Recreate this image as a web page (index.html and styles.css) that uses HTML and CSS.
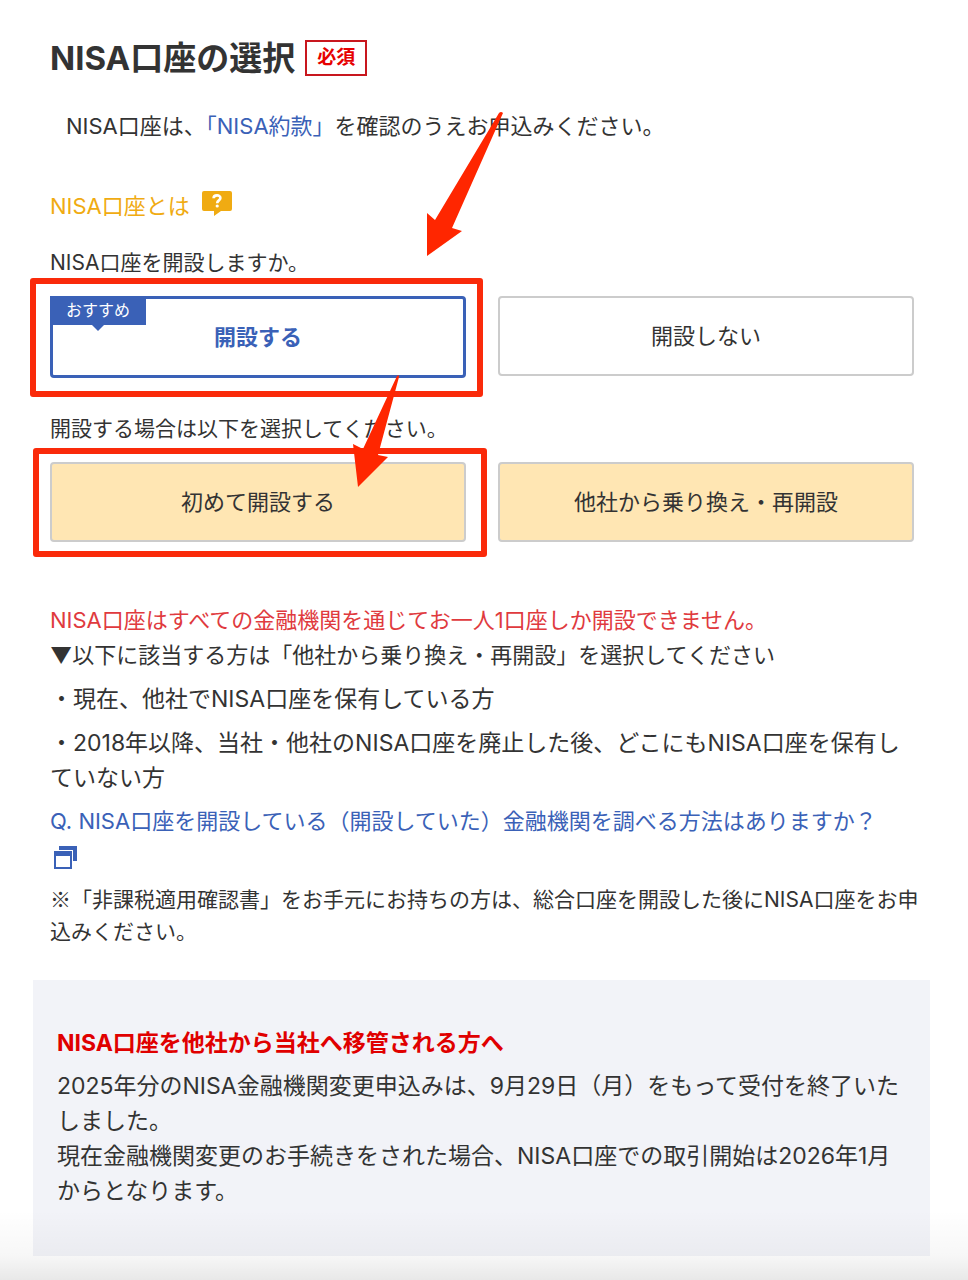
FILE: index.html
```html
<!DOCTYPE html>
<html lang="ja">
  <head>
    <meta charset="utf-8">
    <meta name="viewport" content="width=device-width, initial-scale=1">
    <title>NISA口座の選択</title>
    <link rel="stylesheet" href="styles.css">
  </head>
  <body>
    <main class="page">
      <div class="section">
        <h1 class="title">NISA口座の選択 <span class="required">必須</span></h1>
        <p class="lead">NISA口座は、<a href="#">「NISA約款」</a>を確認のうえお申込みください。</p>

        <a class="help" href="#">
          NISA口座とは
          <svg width="30" height="26" viewBox="0 0 30 26" aria-hidden="true">
            <path fill="#f0ab12" d="M2 0h26a2 2 0 0 1 2 2v16a2 2 0 0 1-2 2H19l-7 5v-5H2a2 2 0 0 1-2-2V2a2 2 0 0 1 2-2z"/>
            <path fill="none" stroke="#fff" stroke-width="2.6" d="M11.6 7.2C11.6 3.6 18.4 3.4 18.4 7c0 2.4-3.2 2.4-3.2 5.2"/>
            <circle cx="15.2" cy="15" r="1.6" fill="#fff"/>
          </svg>
        </a>

        <p class="label" id="open-label">NISA口座を開設しますか。</p>
        <div class="options" role="group" aria-labelledby="open-label">
          <div class="option">
            <button type="button" class="button selected">
              <span class="tag">おすすめ</span>
              開設する
            </button>
            <span class="mark mark-open"></span>
            <svg class="arrow arrow-open" width="80" height="146" viewBox="0 0 80 146" aria-hidden="true">
              <path d="M1 145V102l8 7L73 2q2-2 4 0L26 117l10 3z"/>
            </svg>
          </div>
          <div class="option">
            <button type="button" class="button">開設しない</button>
          </div>
        </div>

        <p class="label label-type" id="type-label">開設する場合は以下を選択してください。</p>
        <div class="options" role="group" aria-labelledby="type-label">
          <div class="option">
            <button type="button" class="button filled">初めて開設する</button>
            <span class="mark mark-first"></span>
            <svg class="arrow arrow-first" width="40" height="114" viewBox="0 0 40 114" aria-hidden="true">
              <path d="M6 113L1 70l10 5L45 2q2-2 2 1L26 81l10 2z"/>
            </svg>
          </div>
          <div class="option">
            <button type="button" class="button filled">他社から乗り換え・再開設</button>
          </div>
        </div>

        <div class="notes">
          <p class="alert">NISA口座はすべての金融機関を通じてお一人1口座しか開設できません。</p>
          <p>▼以下に該当する方は「他社から乗り換え・再開設」を選択してください</p>
          <ul>
            <li>・現在、他社でNISA口座を保有している方</li>
            <li>・2018年以降、当社・他社のNISA口座を廃止した後、どこにもNISA口座を保有し<br>ていない方</li>
          </ul>
          <a class="faq" href="#">
            Q. NISA口座を開設している（開設していた）金融機関を調べる方法はありますか？<br>
            <svg width="24" height="24" viewBox="0 0 24 24" aria-hidden="true">
              <path d="M6 0h18v15h-4V4H6z"/>
              <path fill-rule="evenodd" d="M1 5h18v18H1zM3 10v11h14V10z"/>
            </svg>
          </a>
          <p class="small"><span class="symbol">※</span>「非課税適用確認書」をお手元にお持ちの方は、総合口座を開設した後にNISA口座をお申<br>込みください。</p>
        </div>
      </div>

      <section class="notice">
        <h2>NISA口座を他社から当社へ移管される方へ</h2>
        <p>2025年分のNISA金融機関変更申込みは、9月29日（月）をもって受付を終了いた<br>しました。</p>
        <p>現在金融機関変更のお手続きをされた場合、NISA口座での取引開始は2026年1月<br>からとなります。</p>
      </section>
      <div class="fade"></div>
    </main>
  </body>
</html>
```
FILE: styles.css
```css
* {
  box-sizing: border-box;
}

body {
  margin: 0;
  background-color: white;
  color: #333333;
  font-family: Inter, "Noto Sans CJK JP", sans-serif;
  font-size: 22px;
  line-height: 35px;
}

h1,
h2,
p,
ul {
  margin: 0;
  padding: 0;
}

ul {
  list-style: none;
}

a {
  color: #3a61b7;
  text-decoration: none;
}

.page {
  position: relative;
  padding: 34px 38px 24px 33px;
}

.section {
  padding: 0 16px 0 17px;
}

.title {
  display: flex;
  align-items: center;
  gap: 10px;
  font-size: 33px;
  line-height: 48px;
}

.required {
  padding: 0 10px;
  border: 2px solid #c8171e;
  color: #e60000;
  font-size: 19px;
  line-height: 32px;
}

.lead {
  margin-top: 27px;
  padding-left: 16px;
}

.help {
  display: flex;
  align-items: center;
  gap: 12px;
  width: max-content;
  margin-top: 45px;
  color: #f0ab12;
}

.help svg {
  margin-bottom: 6px;
}

.label {
  margin-top: 23px;
  font-size: 21px;
  line-height: 32px;
}

.label-type {
  margin-top: 35px;
}

.options {
  display: grid;
  grid-template-columns: 1fr 1fr;
  align-items: start;
  gap: 32px;
  margin-top: 17px;
}

.option {
  position: relative;
}

.button {
  position: relative;
  display: block;
  width: 100%;
  height: 80px;
  border: 2px solid #cccccc;
  border-radius: 4px;
  background-color: white;
  color: #333333;
  font: inherit;
  cursor: pointer;
}

.button.selected {
  height: 82px;
  border: 3px solid #3a61b7;
  color: #3a61b7;
  font-weight: bold;
}

.button.filled {
  background-color: #ffe6b3;
}

.tag {
  position: absolute;
  top: -3px;
  left: -3px;
  padding: 0 16px;
  background-color: #3a61b7;
  color: white;
  font-size: 16px;
  font-weight: normal;
  line-height: 29px;
}

.tag::after {
  content: "";
  position: absolute;
  top: 100%;
  left: 50%;
  margin-left: -6px;
  border: 6px solid transparent;
  border-top-color: #3a61b7;
  border-bottom: 0;
}

/* red frames and arrows over the options to pick */
.mark {
  position: absolute;
  border: 6px solid #fa2a0a;
  border-radius: 3px;
  pointer-events: none;
}

.mark-open {
  inset: -18px -17px -19px -20px;
}

.mark-first {
  inset: -14px -21px -15px -17px;
}

.arrow {
  position: absolute;
  z-index: 1;
  overflow: visible;
  fill: #ff2600;
  pointer-events: none;
}

.arrow-open {
  right: -40px;
  bottom: 121px;
}

.arrow-first {
  right: 74px;
  bottom: 54px;
}

.notes {
  margin-top: 61px;
}

.alert {
  color: #e03a3e;
}

.notes li {
  margin-top: 9px;
  font-size: 23px;
}

.faq {
  display: block;
  margin-top: 8px;
}

.faq svg {
  margin-left: 3px;
  vertical-align: middle;
  fill: #3a61b7;
}

.small {
  margin-top: 10px;
  margin-right: -16px;
  font-size: 21px;
  line-height: 32px;
}

/* Inter has its own, smaller reference mark */
.symbol {
  font-family: "Noto Sans CJK JP", sans-serif;
  line-height: 1;
}

.notice {
  margin-top: 32px;
  padding: 46px 24px 47px;
  background-color: #f2f3f8;
  font-size: 23px;
}

.notice h2 {
  margin-bottom: 8px;
  color: #e00000;
  font-size: 23px;
}

.fade {
  position: absolute;
  right: 0;
  bottom: 0;
  left: 0;
  height: 70px;
  background-image: linear-gradient(rgba(0, 0, 0, 0), rgba(0, 0, 0, 0.03) 65%, rgba(0, 0, 0, 0.09));
  pointer-events: none;
}
```
